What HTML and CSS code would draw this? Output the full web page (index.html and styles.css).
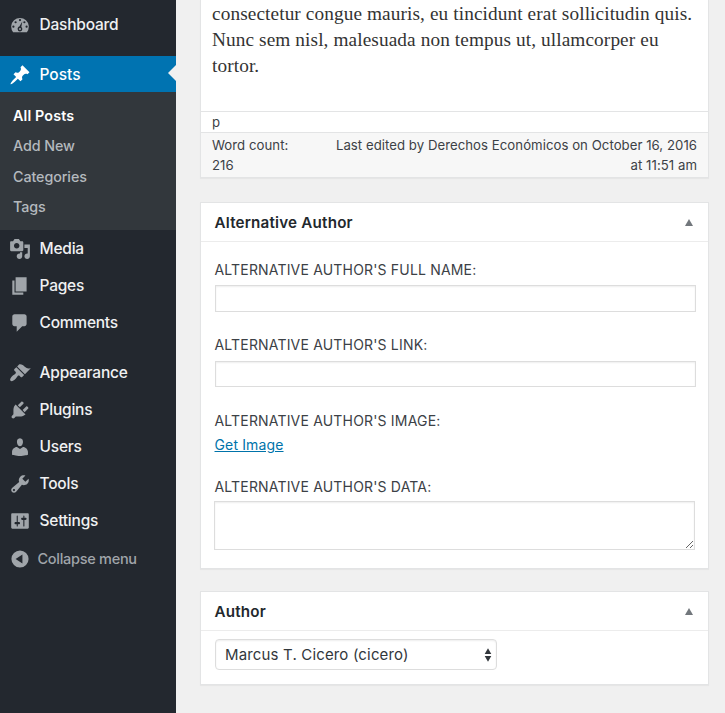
FILE: index.html
```html
<!DOCTYPE html>
<html lang="en">
<head>
<meta charset="utf-8">
<title>Edit Post</title>
<link rel="stylesheet" href="styles.css">
</head>
<body>
<div class="admin">
  <nav class="sidebar">
    <a class="item dashboard"><svg class="icon" viewBox="0 0 20 20"><path fill-rule="evenodd" d="M3.76 16.600h12.480A8 8 0 1 0 3.760 16.600zM9 5.500a1 1 0 1 1 2 0a1 1 0 1 1-2 0zM5 7.500a1 1 0 1 1 2 0a1 1 0 1 1-2 0zM13 7.500a1 1 0 1 1 2 0a1 1 0 1 1-2 0zM3 11.500a1 1 0 1 1 2 0a1 1 0 1 1-2 0zM15 11.500a1 1 0 1 1 2 0a1 1 0 1 1-2 0zM12.100 6.900L9.400 11.300C8.200 11.700 7.700 12.700 7.900 13.900a2.100 2.100 0 0 0 4.200-.2c0-.8-.3-1.400-.9-1.800zM10 12.700a.9.9 0 1 1 0 1.800a.9.9 0 1 1 0-1.800z"/></svg><span>Dashboard</span></a>
    <a class="item current"><svg class="icon" viewBox="0 0 20 20"><path d="M10.440 3.020l1.820-1.820 6.360 6.350-1.830 1.820c-1.050-.68-2.480-.57-3.410.36l-.75.75c-.92.93-1.040 2.350-.35 3.410l-1.830 1.820-2.410-2.410-2.800 2.790c-.42.42-3.380 2.710-3.800 2.290s1.860-3.390 2.280-3.810l2.790-2.790L4.100 9.360l1.830-1.820c1.050.69 2.480.57 3.400-.36l.75-.75c.93-.92 1.050-2.350.36-3.410z"/></svg><span>Posts</span></a>
    <div class="submenu">
      <a class="active">All Posts</a>
      <a>Add New</a>
      <a>Categories</a>
      <a>Tags</a>
    </div>
    <a class="item"><svg class="icon" viewBox="0 0 20 20"><path d="M13 11V4c0-.55-.45-1-1-1h-1.670L9 1H5L3.670 3H2c-.55 0-1 .45-1 1v7c0 .55.45 1 1 1h10c.55 0 1-.45 1-1zM7 4.500c1.380 0 2.500 1.120 2.500 2.500S8.380 9.500 7 9.500 4.500 8.380 4.500 7 5.620 4.500 7 4.500zM14 6h5v10.500c0 1.380-1.120 2.500-2.500 2.500S14 17.880 14 16.500s1.120-2.500 2.500-2.500c.17 0 .34.02.5.05V9h-3V6zm-4 8.050V13h2v3.500c0 1.380-1.120 2.500-2.500 2.500S7 17.880 7 16.500 8.120 14 9.500 14c.17 0 .34.02.5.05z"/></svg><span>Media</span></a>
    <a class="item"><svg class="icon" viewBox="0 0 20 20"><path d="M6 15V2h10v13H6zm-1 1h8v2H3V5h2v11z"/></svg><span>Pages</span></a>
    <a class="item comments"><svg class="icon" viewBox="0 0 20 20"><path d="M5 2h9c1.100 0 2 .9 2 2v7c0 1.100-.9 2-2 2h-2l-5 5v-5H5c-1.100 0-2-.9-2-2V4c0-1.100.9-2 2-2z"/></svg><span>Comments</span></a>
    <a class="item"><svg class="icon" viewBox="0 0 20 20"><path d="M14.480 11.060L7.410 3.990l1.500-1.500c.5-.56 2.300-.47 3.510.32 1.210.8 1.430 1.280 2.910 2.100 1.180.64 2.450 1.260 4.450.85zm-.71.71L6.700 4.700 4.930 6.470c-.39.39-.39 1.020 0 1.410l1.060 1.060c.39.39.39 1.030 0 1.420-.6.6-1.430 1.110-2.210 1.690-.35.26-.7.53-1.010.84C1.430 14.230.4 16.080 1.400 17.070c.99 1 2.840-.03 4.180-1.360.31-.31.58-.66.85-1.020.57-.78 1.080-1.610 1.690-2.210.39-.39 1.020-.39 1.410 0l1.060 1.060c.39.39 1.020.39 1.410 0z"/></svg><span>Appearance</span></a>
    <a class="item"><svg class="icon" viewBox="0 0 20 20"><path d="M13.110 4.360L9.870 7.600 8 5.730l3.240-3.240c.35-.34 1.050-.2 1.560.32.52.51.66 1.210.31 1.550zm-8 1.770l.91-1.120 9.010 9.010-1.190.84c-.71.71-2.630 1.160-3.820 1.160H6.140L4.900 17.260c-.59.59-1.540.59-2.120 0-.59-.58-.59-1.530 0-2.120l1.240-1.240v-3.880c0-1.130.4-3.190 1.090-3.890zm7.260 3.970l3.240-3.240c.34-.35 1.040-.21 1.550.31.52.51.66 1.210.31 1.550l-3.240 3.250z"/></svg><span>Plugins</span></a>
    <a class="item"><svg class="icon" viewBox="0 0 20 20"><path d="M10 9.250c-2.270 0-2.730-3.440-2.730-3.440C7 4.020 7.820 2 9.970 2c2.160 0 2.980 2.020 2.710 3.810 0 0-.41 3.440-2.680 3.440zm0 2.570L12.720 10c2.390 0 4.520 2.330 4.520 4.530v2.490s-3.650 1.130-7.240 1.130c-3.650 0-7.240-1.130-7.240-1.130v-2.490c0-2.250 1.940-4.480 4.470-4.480z"/></svg><span>Users</span></a>
    <a class="item"><svg class="icon" viewBox="0 0 20 20"><path d="M16.680 9.770c-1.340 1.340-3.300 1.670-4.950.99l-5.410 6.520c-.99.99-2.590.99-3.580 0s-.99-2.590 0-3.570l6.520-5.420c-.68-1.650-.35-3.610.99-4.950 1.280-1.280 3.120-1.620 4.720-1.060l-2.890 2.890 2.820 2.820 2.860-2.870c.53 1.580.18 3.390-1.080 4.650zM3.810 16.210c.4.39 1.040.39 1.430 0 .4-.4.4-1.040 0-1.430-.39-.4-1.030-.4-1.430 0-.39.39-.39 1.030 0 1.430z"/></svg><span>Tools</span></a>
    <a class="item"><svg class="icon" viewBox="0 0 20 20"><path d="M18 16V4c0-.55-.45-1-1-1H3c-.55 0-1 .45-1 1v12c0 .55.45 1 1 1h14c.55 0 1-.45 1-1zM8 11h1c.55 0 1 .45 1 1s-.45 1-1 1H8v1.500c0 .28-.22.5-.5.5s-.5-.22-.5-.5V13H6c-.55 0-1-.45-1-1s.45-1 1-1h1V5.500c0-.28.22-.5.5-.5s.5.22.5.5V11zm5-2h-1c-.55 0-1-.45-1-1s.45-1 1-1h1V5.500c0-.28.22-.5.5-.5s.5.22.5.5V7h1c.55 0 1 .45 1 1s-.45 1-1 1h-1v5.500c0 .28-.22.5-.5.5s-.5-.22-.5-.5V9z"/></svg><span>Settings</span></a>
    <a class="item collapse"><svg class="icon" viewBox="0 0 20 20"><path fill-rule="evenodd" d="M10 2.200a7.800 7.800 0 1 0 0 15.600a7.800 7.800 0 1 0 0-15.600zM12.200 6v8L6 10z"/></svg><span>Collapse menu</span></a>
  </nav>
  <main class="content">
    <section class="panel editor">
      <p class="body-text">consectetur congue mauris, eu tincidunt erat sollicitudin quis.<br>Nunc sem nisl, malesuada non tempus ut, ullamcorper eu<br>tortor.</p>
      <div class="path">p</div>
      <div class="status"><div>Word count:<br>216</div><div class="edited">Last edited by Derechos Económicos on October 16, 2016<br>at 11:51 am</div></div>
    </section>
    <section class="panel alternative">
      <h2><span>Alternative Author</span><i class="toggle"></i></h2>
      <div class="fields">
        <label for="name">ALTERNATIVE AUTHOR'S FULL NAME:</label>
        <input id="name" class="name" type="text">
        <label for="link">ALTERNATIVE AUTHOR'S LINK:</label>
        <input id="link" class="link" type="text">
        <span class="label">ALTERNATIVE AUTHOR'S IMAGE:</span>
        <a class="get"><span>Get Image</span></a>
        <label for="data">ALTERNATIVE AUTHOR'S DATA:</label>
        <textarea id="data"></textarea>
      </div>
    </section>
    <section class="panel author">
      <h2><span>Author</span><i class="toggle"></i></h2>
      <div class="select"><span>Marcus T. Cicero (cicero)</span><svg viewBox="0 0 8 14"><path d="M4 .3L7.300 6H.7zM4 13.700L.7 8h6.600z"/></svg></div>
    </section>
  </main>
</div>
</body>
</html>
```
FILE: styles.css
```css
* { box-sizing: border-box; }
body { margin: 0; background: #f0f0f0; color: #3c4146; font: 14px/20px Inter, "Liberation Sans", sans-serif; }
.admin { display: flex; height: 713px; overflow: hidden; }
.sidebar { width: 176px; flex: none; background: #23282f; padding-top: 6px; }
.item { display: flex; align-items: center; gap: 8.500px; height: 37px; padding-left: 9px; color: #f0f1f2; font-size: 15.500px; font-weight: 500; letter-spacing: -.22px; }
.icon { width: 22px; height: 22px; flex: none; fill: #a0a5aa; }
.dashboard, .comments { margin-bottom: 13px; }
.current { height: 36px; padding-top: 1px; background: #0073b1; color: #fff; position: relative; letter-spacing: 0; }
.current .icon { fill: #fff; }
.current::after { content: ""; position: absolute; right: 0; top: 9px; border: 8px solid transparent; border-left: 0; border-right-color: #f0f0f0; }
.submenu { height: 138px; padding: 9px 0 0 13px; background: #32373c; }
.submenu a { display: block; height: 30.300px; line-height: 30px; font-size: 14.300px; font-weight: 500; letter-spacing: -.08px; color: #b4b9be; }
.submenu .active { color: #fff; font-weight: 600; letter-spacing: .15px; }
.collapse { height: 40px; color: #a0a5aa; font-size: 14.500px; gap: 6.500px; letter-spacing: -.28px; }
.content { width: 509px; margin-left: 24px; }
.panel { background: #fff; border: 1px solid #e3e4e5; box-shadow: 0 1px 1px rgba(0,0,0,.04); }
.editor { height: 178px; border-top: 0; }
.body-text { height: 111px; margin: 0; padding: 1px 11px 0; font: 19.300px/26px "Liberation Serif", serif; letter-spacing: .1px; color: #333; white-space: nowrap; }
.path { height: 21px; padding-left: 11px; border-top: 1px solid #e3e4e5; font-size: 13.200px; line-height: 21px; }
.status { display: flex; justify-content: space-between; height: 45px; padding: 2px 11px; background: #f7f7f7; border-top: 1px solid #e3e4e5; font-size: 13.200px; letter-spacing: .04px; }
.edited { text-align: right; white-space: nowrap; }
.alternative { height: 367px; margin-top: 24px; }
h2 { display: flex; justify-content: space-between; align-items: center; height: 39px; margin: 0; padding: 1px 15px 0 13.500px; border-bottom: 1px solid #ececec; color: #23282d; font-size: 15.200px; font-weight: 600; letter-spacing: .2px; }
.toggle { width: 0; height: 0; border: 4.500px solid transparent; border-top: 0; border-bottom: 7px solid #72777c; }
.fields { display: flex; flex-direction: column; padding: 18px 12px 0 14px; }
label, .label { height: 20px; margin-left: -.5px; font-size: 14px; letter-spacing: .18px; }
input { height: 27px; width: 481px; margin: 5px 0 23px; padding: 0; border: 1px solid #ddd; box-shadow: inset 0 1px 2px rgba(0,0,0,.07); }
.link { height: 26px; margin: 6px 0 24px; }
.get { height: 20px; margin: 4px 0 22px -.5px; color: #0073aa; text-decoration: underline; letter-spacing: .14px; }
textarea { width: 481px; height: 49px; margin: 4px 0 0 -1px; border: 1px solid #ddd; box-shadow: inset 0 1px 2px rgba(0,0,0,.07); resize: vertical; }
.author { height: 94px; margin-top: 22px; }
.select { display: flex; align-items: center; justify-content: space-between; width: 282px; height: 31px; margin: 8px 0 0 14px; padding: 0 4px 0 9px; border: 1px solid #ddd; border-radius: 4px; box-shadow: inset 0 1px 2px rgba(0,0,0,.07); color: #32373c; font-size: 15px; letter-spacing: .16px; }
.select svg { width: 8px; height: 14px; fill: #32373c; }
```
